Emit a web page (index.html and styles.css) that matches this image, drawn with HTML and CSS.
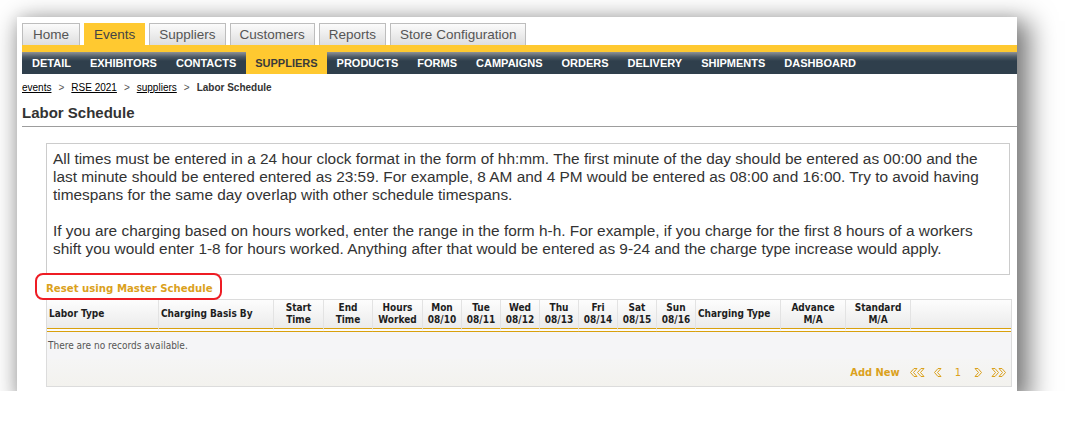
FILE: index.html
```html
<!DOCTYPE html>
<html lang="en">
<head>
    <meta charset="UTF-8">
    <meta name="viewport" content="width=device-width, initial-scale=1.0">
    <title>Labor Schedule</title>
    <link rel="stylesheet" href="styles.css">
</head>
<body>
    <div class="window">
        <div class="tabs">
            <a class="tab" href="#">Home</a>
            <a class="tab active" href="#">Events</a>
            <a class="tab" href="#">Suppliers</a>
            <a class="tab" href="#">Customers</a>
            <a class="tab" href="#">Reports</a>
            <a class="tab" href="#">Store Configuration</a>
        </div>
        <div class="tab-strip"></div>
        <ul class="subnav">
            <li>Detail</li>
            <li>Exhibitors</li>
            <li>Contacts</li>
            <li class="active">Suppliers</li>
            <li>Products</li>
            <li>Forms</li>
            <li>Campaigns</li>
            <li>Orders</li>
            <li>Delivery</li>
            <li>Shipments</li>
            <li>Dashboard</li>
        </ul>

        <div class="breadcrumb">
            <a href="#">events</a><span class="sep">&gt;</span><a href="#">RSE 2021</a><span class="sep">&gt;</span><a href="#">suppliers</a><span class="sep">&gt;</span><span class="current">Labor Schedule</span>
        </div>

        <h2 class="page-title">Labor Schedule</h2>

        <div class="content">
            <div class="info-box">
                All times must be entered in a 24 hour clock format in the form of hh:mm. The first minute of the day should be entered as 00:00 and the last minute should be entered entered as 23:59. For example, 8 AM and 4 PM would be entered as 08:00 and 16:00. Try to avoid having timespans for the same day overlap with other schedule timespans.<br><br>
                If you are charging based on hours worked, enter the range in the form h-h. For example, if you charge for the first 8 hours of a workers shift you would enter 1-8 for hours worked. Anything after that would be entered as 9-24 and the charge type increase would apply.
            </div>

            <div class="reset-row">
                <a class="gold-link reset-link" href="#">Reset using Master Schedule</a>
                <span class="highlight"></span>
            </div>

            <div class="grid">
                <table class="grid-table">
                    <colgroup>
                        <col style="width: 111px">
                        <col style="width: 115px">
                        <col style="width: 50px">
                        <col style="width: 49px">
                        <col style="width: 50px">
                        <col style="width: 39px">
                        <col style="width: 39px">
                        <col style="width: 39px">
                        <col style="width: 39px">
                        <col style="width: 39px">
                        <col style="width: 39px">
                        <col style="width: 39px">
                        <col style="width: 85px">
                        <col style="width: 65px">
                        <col style="width: 65px">
                        <col>
                    </colgroup>
                    <tr>
                        <th class="left">Labor Type</th>
                        <th class="left">Charging Basis By</th>
                        <th>Start<br>Time</th>
                        <th>End<br>Time</th>
                        <th>Hours<br>Worked</th>
                        <th>Mon<br>08/10</th>
                        <th>Tue<br>08/11</th>
                        <th>Wed<br>08/12</th>
                        <th>Thu<br>08/13</th>
                        <th>Fri<br>08/14</th>
                        <th>Sat<br>08/15</th>
                        <th>Sun<br>08/16</th>
                        <th class="left">Charging Type</th>
                        <th>Advance<br>M/A</th>
                        <th>Standard<br>M/A</th>
                        <th></th>
                    </tr>
                </table>
                <div class="no-records">There are no records available.</div>
                <div class="grid-footer">
                    <a class="gold-link" href="#">Add New</a>
                    <div class="pager">
                        <svg width="15" height="9" viewBox="0 0 15 9"><path d="M4 .5h3L3.5 4.5 7 8.5H4L.5 4.5zM11 .5h3l-3.5 4 3.5 4h-3l-3.5-4z"/></svg>
                        <svg width="8" height="9" viewBox="0 0 8 9"><path d="M4 .5h3L3.5 4.5 7 8.5H4L.5 4.5z"/></svg>
                        <span class="page-num">1</span>
                        <svg width="8" height="9" viewBox="0 0 8 9"><path d="M4 .5H1l3.5 4L1 8.5h3l3.5-4z"/></svg>
                        <svg width="15" height="9" viewBox="0 0 15 9"><path d="M4 .5H1l3.5 4L1 8.5h3l3.5-4zM11 .5H8l3.5 4L8 8.5h3l3.5-4z"/></svg>
                    </div>
                </div>
            </div>
        </div>
    </div>
</body>
</html>
```

FILE: styles.css
```css
body {
    margin: 0;
    background-color: #fff;
    font-family: "Liberation Sans", Arial, sans-serif;
}

.window {
    width: 1000px;
    height: 374px;
    margin: 17px 0 0 17px;
    padding: 6px 0 0 5px;
    box-sizing: border-box;
    background-color: #fff;
    box-shadow: 0 0 14px rgba(0, 0, 0, 0.07), 8px 9px 24px 5px rgba(0, 0, 0, 0.5);
}

/* Top tabs */
.tabs {
    display: flex;
    gap: 4px;
    height: 22px;
}

.tab {
    min-width: 38px;
    padding: 0 9px;
    line-height: 21px;
    font-size: 13.5px;
    text-align: center;
    color: #555;
    text-decoration: none;
    border: 1px solid #bdbdbd;
    border-bottom: none;
    background: linear-gradient(#fbfbfb, #dedede);
}

.tab.active {
    background: #ffc930;
    border-color: #ffc930;
    color: #444;
}

.tab-strip {
    height: 7px;
    background-color: #ffc930;
}

.subnav {
    display: flex;
    margin: 0;
    padding: 0 0 0 0.5px;
    list-style: none;
    height: 22px;
    background: linear-gradient(#8f9397 0, #4b5864 5px, #2f3f4c 9px, #2f3f4c 100%);
}

.subnav li {
    padding: 0 9.5px;
    line-height: 22px;
    font-size: 11px;
    font-weight: bold;
    text-transform: uppercase;
    color: #fff;
}

.subnav li.active {
    background-color: #ffc930;
    color: #3a3a3a;
}

/* Breadcrumb and title */
.breadcrumb {
    margin-top: 8px;
    font-size: 10px;
    line-height: 12px;
    color: #333;
}

.breadcrumb a {
    color: #000;
}

.breadcrumb .sep {
    margin: 0 7px;
    color: #555;
}

.breadcrumb .current {
    font-weight: bold;
}

.page-title {
    margin: 10px 0 0 0;
    padding-bottom: 4px;
    font-size: 15px;
    line-height: 18px;
    color: #333;
    border-bottom: 1px solid #9d9d9d;
}

.content {
    padding: 16px 5px 0 24px;
}

.info-box {
    margin-right: 2px;
    padding: 6px 19px 16px 6px;
    border: 1px solid #ccc;
    font-size: 15.4px;
    line-height: 18px;
    color: #333;
}

.reset-row {
    position: relative;
    height: 24px;
    line-height: 24px;
}

.gold-link {
    font-family: "DejaVu Sans Condensed", "DejaVu Sans", sans-serif;
    font-stretch: condensed;
    font-size: 11px;
    font-weight: bold;
    color: #dba11c;
    text-decoration: none;
}

.reset-link {
    font-size: 11.3px;
}

/* annotation box round the reset link */
.highlight {
    position: absolute;
    left: -11px;
    top: -2px;
    width: 187px;
    height: 27px;
    box-sizing: border-box;
    border: 2px solid #ee1c24;
    border-radius: 8px;
}

/* Grid */
.grid {
    border: 1px solid #dcdcdc;
    font-family: "DejaVu Sans Condensed", "DejaVu Sans", sans-serif;
    font-stretch: condensed;
    font-size: 10px;
}

.grid-table {
    width: 100%;
    border-collapse: separate;
    border-spacing: 0;
    table-layout: fixed;
}

.grid-table th {
    padding: 2px 2px;
    line-height: 12px;
    height: 24px;
    font-weight: bold;
    color: #1e1e1e;
    text-align: center;
    white-space: nowrap;
    overflow: hidden;
    background: linear-gradient(#fdfdfd, #ebebeb);
    border-left: 1px solid #e3e3e3;
    border-bottom: 4px double #d9a00c;
}

.grid-table th:first-child {
    border-left: none;
}

.grid-table th.left {
    text-align: left;
}

.no-records {
    height: 27px;
    line-height: 27px;
    padding-left: 1px;
    color: #555;
    background-color: #f5f5f7;
}

.grid-footer {
    display: flex;
    justify-content: flex-end;
    align-items: center;
    height: 27px;
    padding-right: 5px;
    background: linear-gradient(#f5f5f5, #f3f2ee);
}

.pager {
    display: flex;
    align-items: center;
    gap: 9px;
    margin-left: 10px;
}

.pager svg path {
    fill: none;
    stroke: #dba11c;
    stroke-width: 1;
}

.page-num {
    margin: 0 4px;
    font-size: 11px;
    color: #dba11c;
}
```
